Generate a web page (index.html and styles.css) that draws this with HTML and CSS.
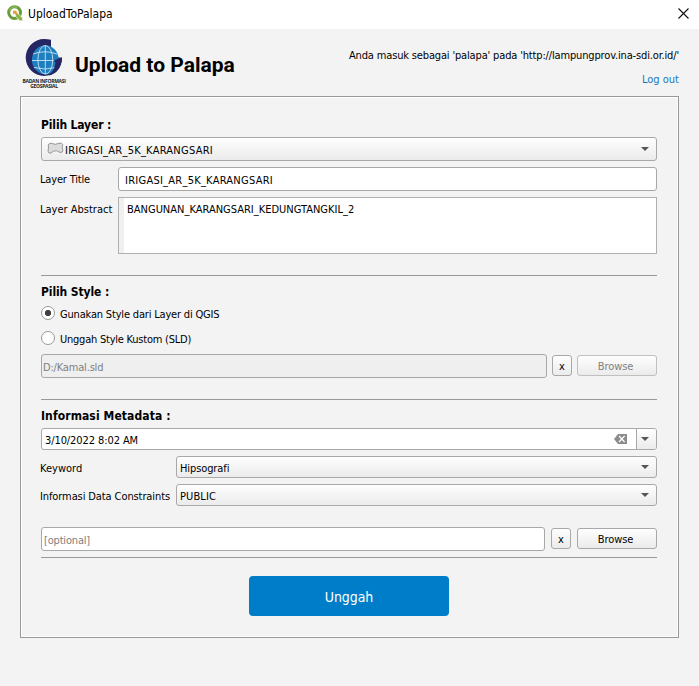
FILE: index.html
```
<!DOCTYPE html>
<html lang="id">
<head>
<meta charset="utf-8">
<title>UploadToPalapa</title>
<link rel="stylesheet" href="styles.css">
</head>
<body>
<div class="titlebar">
  <svg class="app-icon" width="16" height="16" viewBox="0 0 16 16">
    <circle cx="7.6" cy="7.6" r="5.9" fill="none" stroke="#6a9c3a" stroke-width="3"/>
    <path d="M2.2 5.6A5.8 5.8 0 0 1 10.4 2.6" fill="none" stroke="#8ab450" stroke-width="1.6"/>
    <path d="M8.6 8.2L10.6 8.2L15.6 13V15.8H12.6L8.6 11.4Z" fill="#8cb648" stroke="#fff" stroke-width=".6"/>
    <path d="M5.8 5.8H9.8L9.4 7L10.8 8.6L9.2 10L7.6 8.6L6.4 9.4Z" fill="#e79c36"/>
  </svg>
  <span class="window-title">UploadToPalapa</span>
  <svg class="close" width="11" height="11" viewBox="0 0 11 11"><path d="M.5.5L10.5 10.5M10.5.5L.5 10.5" stroke="#111" stroke-width="1.1"/></svg>
</div>

<header class="header">
  <div class="brand">
    <svg width="38" height="38" viewBox="0 0 38 38">
      <path d="M26 .8Q22.5 0 19 0A18.3 18.5 0 0 0 19 37A18.3 18.5 0 0 0 37 18.5L31 18.5L26 8Z" fill="#262662"/>
      <path d="M26 .8V9L33 18L37 18.3V0H26Z" fill="#f3f3f3"/>
      <ellipse cx="20.3" cy="20.8" rx="13.4" ry="14.6" fill="#1d7fc0"/>
      <g fill="none" stroke="#c9e2f2" stroke-width=".9">
        <path d="M20.3 6.4V35M8.2 15Q20 10.5 32 15M7 21.5H33.5M9 28.5Q20 31.5 31.5 28.5"/>
        <ellipse cx="20.3" cy="20.8" rx="7.4" ry="14.3"/>
      </g>
      <path d="M28.5 21.5L37 18.4Q36.8 33 23.5 36.8Q29.5 32 30.5 23.5Z" fill="#262662"/>
    </svg>
    <span class="brand-name">BADAN INFORMASI<br>GEOSPASIAL</span>
  </div>
  <h1>Upload to Palapa</h1>
  <div class="session">
    <span class="user">Anda masuk sebagai 'palapa' pada 'http://lampungprov.ina-sdi.or.id/'</span>
    <a class="logout">Log out</a>
  </div>
</header>

<main class="panel">
  <section class="section layer">
    <h2 class="h-layer">Pilih Layer :</h2>
    <div class="combo layer-combo">
      <svg width="17" height="13" viewBox="0 0 17 13"><path d="M1.2 3Q2 .9 4.4 1.3Q8.3 3.4 12 1.3Q14.9.4 15.7 2.6Q14.6 5.6 15.9 8.4Q15.6 11 13 10.4Q9.5 7.6 6.2 9.2Q4 12 2 11Q.5 9.5 1.3 7.2Q1.8 5 1.2 3Z" fill="#dcdcdc" stroke="#969696"/></svg>
      <span class="caps">IRIGASI_AR_5K_KARANGSARI</span><i class="arrow"></i>
    </div>
    <div class="row title-row">
      <label class="tight">Layer Title</label>
      <div class="input"><span class="caps">IRIGASI_AR_5K_KARANGSARI</span></div>
    </div>
    <div class="row abstract-row">
      <label>Layer Abstract</label>
      <div class="textarea">BANGUNAN_KARANGSARI_KEDUNGTANGKIL_2</div>
    </div>
  </section>

  <section class="section style">
    <h2 class="h-style">Pilih Style :</h2>
    <div class="radio first"><i class="dot on"></i><span class="tight">Gunakan Style dari Layer di QGIS</span></div>
    <div class="radio"><i class="dot"></i><span class="tight custom">Unggah Style Kustom (SLD)</span></div>
    <div class="files style-file">
      <div class="input disabled"><span class="tight">D:/Kamal.sld</span></div>
      <div class="button clear">x</div>
      <div class="button browse off">Browse</div>
    </div>
  </section>

  <section class="section meta">
    <h2 class="h-meta">Informasi Metadata :</h2>
    <div class="date">
      <span class="date-text">3/10/2022 8:02 AM</span>
      <svg width="13" height="10" viewBox="0 0 13 10"><path d="M4 0H13V10H4L0 5Z" fill="#8c8c8c"/><path d="M5 2L10.6 8M10.6 2L5 8" stroke="#fff" stroke-width="1.2"/></svg>
      <div class="drop"><i class="arrow"></i></div>
    </div>
    <div class="row meta-row">
      <label>Keyword</label>
      <div class="combo"><span class="snug">Hipsografi</span><i class="arrow"></i></div>
    </div>
    <div class="row meta-row">
      <label class="snug">Informasi Data Constraints</label>
      <div class="combo"><span class="public">PUBLIC</span><i class="arrow"></i></div>
    </div>
    <div class="files meta-file">
      <div class="input"><span class="placeholder">[optional]</span></div>
      <div class="button clear">x</div>
      <div class="button browse">Browse</div>
    </div>
  </section>

  <div class="submit">Unggah</div>
</main>
</body>
</html>
```

FILE: styles.css
```
* { box-sizing: border-box; }

body {
  margin: 0;
  height: 686px;
  overflow: hidden;
  background: #f3f3f3;
  color: #000;
  font: 11px/14px "DejaVu Sans Condensed", "DejaVu Sans", sans-serif;
}

h1, h2 { margin: 0; }
svg { display: block; flex: none; }
span, label { white-space: nowrap; }

.titlebar {
  display: flex;
  align-items: center;
  height: 29px;
  padding: 0 10px 3px 7px;
  background: #fff;
}
.window-title { margin-left: 5px; padding-top: 2px; font-size: 12px; }
.close { margin-left: auto; }

.header { display: flex; height: 67px; padding-right: 20px; }
.brand {
  display: flex;
  flex-direction: column;
  align-items: center;
  width: 48px;
  margin: 10px 0 0 20px;
}
.brand-name {
  margin-top: 2px;
  color: #1c1c1c;
  font: bold 5px/5px "Open Sans", sans-serif;
  letter-spacing: -.3px;
  text-align: center;
}
h1 { margin: 22px 0 0 7px; font: bold 21px/28px Roboto, sans-serif; white-space: nowrap; }
.session { display: flex; flex-direction: column; align-items: flex-end; margin: 19px 0 0 auto; }
.user { padding-top: 1px; letter-spacing: -.155px; }
.logout { margin-top: 10px; color: #1878bc; }

.panel {
  width: 659px;
  height: 542px;
  margin-left: 20px;
  padding: 20px 21px 0 20px;
  border: 1px solid #999;
  box-shadow: inset 1px 1px #fff, inset -1px -1px #fbfbfb;
}

.section { border-bottom: 1px solid #999; }
.layer { height: 159px; }
.style { height: 124px; padding-top: 8px; }
.meta { height: 158px; padding-top: 8px; }

h2 { height: 16px; font-size: 12px; line-height: 16px; white-space: nowrap; }
.h-layer { letter-spacing: -.14px; }
.h-style { letter-spacing: -.1px; }
.h-meta { letter-spacing: .1px; }

.caps { letter-spacing: .25px; }
.tight { letter-spacing: -.18px; }
.custom { letter-spacing: -.23px; }
.snug { letter-spacing: -.1px; }

.combo, .input, .button, .date {
  display: flex;
  align-items: center;
  border: 1px solid #a8a8a8;
  border-radius: 3px;
}
.combo, .button { background: linear-gradient(#fefefe, #ebebeb); }
.combo { flex: 1; height: 22px; padding: 3px 7px 0 3px; }
.combo .arrow { margin: -3px 0 0 auto; }
.arrow {
  width: 8px;
  height: 4px;
  background: #555;
  clip-path: polygon(0 0, 100% 0, 50% 100%);
}
.layer-combo { height: 24px; margin-top: 4px; padding-left: 5px; }
.layer-combo svg { margin: -4px 1px 0 0; }

.row { display: flex; margin-left: -1px; }
.title-row { margin-top: 6px; }
.title-row label, .abstract-row label { width: 78px; padding-top: 6px; }
.input { flex: 1; height: 24px; background: #fff; padding-top: 3px; }
.title-row .input { padding-left: 6px; }
.abstract-row { margin-top: 6px; }
.textarea {
  flex: 1;
  height: 57px;
  padding: 5px 3px 5px 8px;
  border: 1px solid #b0b0b0;
  background: #fff;
  box-shadow: inset 5px 0 #f0f0f0;
}

.radio { display: flex; align-items: center; height: 14px; margin-top: 11px; }
.radio.first { margin-top: 6px; }
.radio span { margin-left: 5px; padding-top: 3px; }
.dot {
  width: 14px;
  height: 14px;
  border: 1px solid #999;
  border-radius: 50%;
  background: #fff;
}
.dot.on { background: radial-gradient(circle, #404040 2.8px, #fff 3.5px); }

.files { display: flex; }
.files .input { padding-left: 2px; }
.style-file { margin-top: 9px; }
.style-file .input.disabled { padding-left: 1px; background: #efefef; color: #808080; }
.button { justify-content: center; height: 21px; margin-top: 1px; padding-top: 2px; }
.clear { width: 20px; margin-left: 5px; }
.browse { width: 80px; margin-left: 5px; padding-right: 3px; letter-spacing: -.1px; }
.off { border-color: #c0c0c0; color: #808080; }

.date { height: 22px; margin-top: 4px; background: #fff; overflow: hidden; }
.date-text { margin: 3px auto 0 3px; letter-spacing: -.09px; }
.date svg { margin-right: 9px; }
.drop {
  display: flex;
  align-items: center;
  width: 20px;
  height: 20px;
  padding-left: 4px;
  border-left: 1px solid #a8a8a8;
  background: linear-gradient(#fefefe, #ebebeb);
}
.meta-row { margin-top: 6px; }
.meta-row label { width: 136px; padding-top: 6px; }
.public { letter-spacing: .1px; }
.meta-file { margin-top: 21px; }
.meta-file .clear { margin-left: 6px; }
.meta-file .browse { margin-left: 6px; }
.placeholder { color: #808080; letter-spacing: -.18px; }

.submit {
  width: 200px;
  height: 40px;
  margin: 18px 0 0 208px;
  border-radius: 4px;
  background: #007dc8;
  color: #fff;
  font-size: 14px;
  line-height: 42px;
  letter-spacing: -.1px;
  text-align: center;
}
```
